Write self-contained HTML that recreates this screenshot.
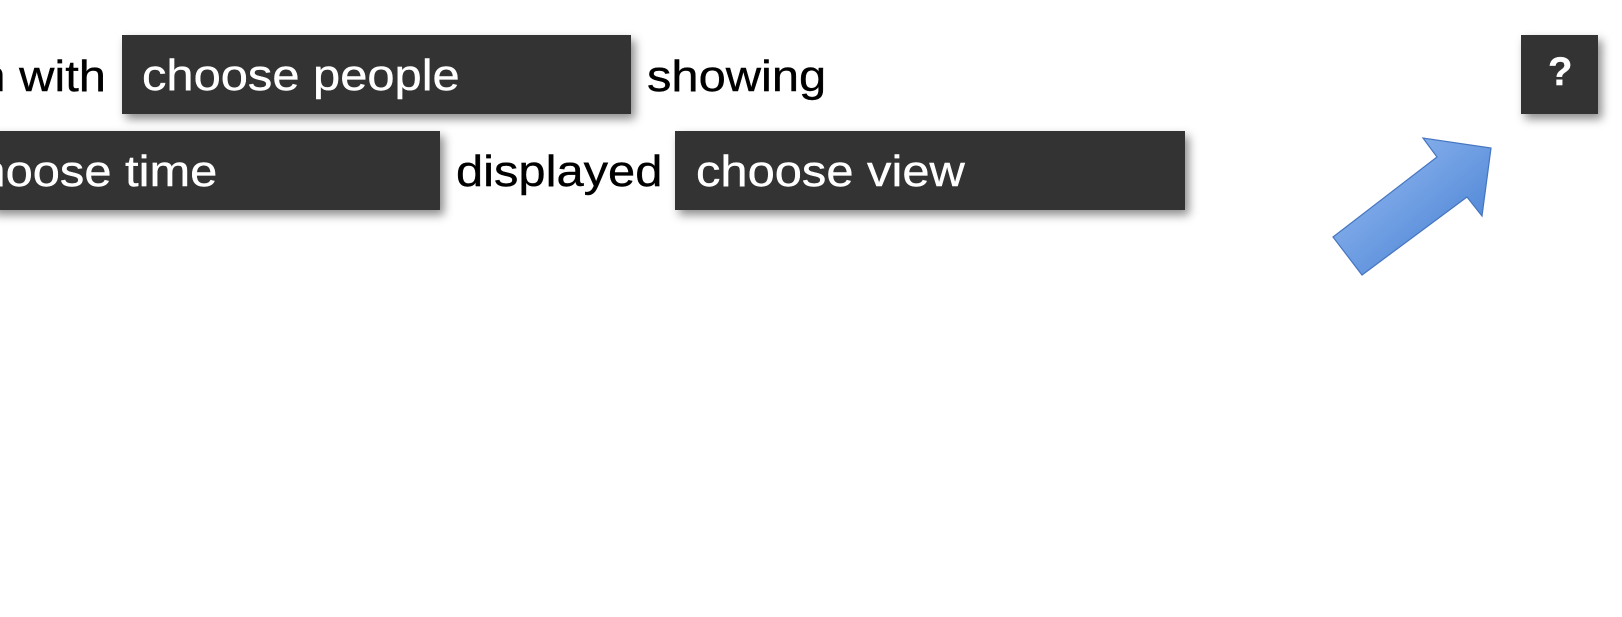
<!DOCTYPE html>
<html><head><style>
html,body{margin:0;padding:0;background:#fff;width:1622px;height:617px;overflow:hidden;position:relative;font-family:"Liberation Sans",Arial,sans-serif;}
.t{position:absolute;font-size:44px;color:#000;line-height:1;white-space:nowrap;transform:scaleX(1.11);transform-origin:left top;-webkit-text-stroke:0.4px #000;}
.b{position:absolute;background:#333;box-shadow:4px 5px 9px rgba(0,0,0,0.45);overflow:hidden;}
.b span{position:absolute;top:19px;font-size:44px;color:#fff;line-height:1;white-space:nowrap;transform:scaleX(1.11);transform-origin:left top;-webkit-text-stroke:0.4px #fff;}
</style></head><body>
<div class="t" style="right:1516px;top:55px;transform-origin:right top;">n with</div>
<div class="b" style="left:122px;top:35px;width:509px;height:79px;"><span style="left:20px;">choose people</span></div>
<div class="t" style="left:647px;top:55px;">showing</div>
<div class="b" style="left:-10px;top:131px;width:450px;height:79px;"><span style="left:-36px;">choose time</span></div>
<div class="t" style="left:456px;top:150px;">displayed</div>
<div class="b" style="left:675px;top:131px;width:510px;height:79px;"><span style="left:21px;">choose view</span></div>
<div class="b" style="left:1521px;top:35px;width:77px;height:79px;"><span style="left:27px;top:17px;font-weight:bold;font-size:40px;transform:none;">?</span></div>
<svg style="position:absolute;left:0;top:0" width="1622" height="617">
<defs><linearGradient id="g" x1="0" y1="0" x2="1" y2="1"><stop offset="0" stop-color="#9cc0f4"/><stop offset="1" stop-color="#3f7ad0"/></linearGradient></defs>
<polygon points="1491,148 1482,216 1467,197 1362,275 1333,237 1437,157 1423,138" fill="url(#g)" stroke="#4676c0" stroke-width="1.2"/>
</svg>
</body></html>
